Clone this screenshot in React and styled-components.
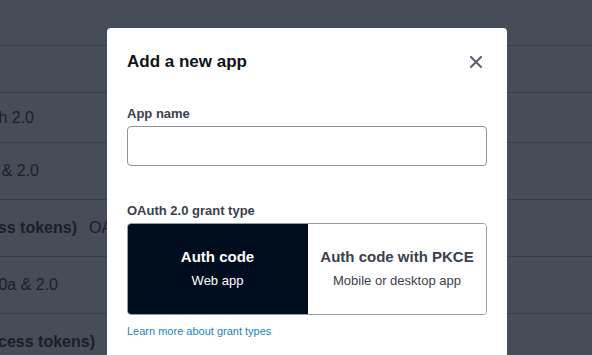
import styled, { createGlobalStyle } from "styled-components"

const GlobalStyle = createGlobalStyle`
    html, body {
        margin: 0;
        padding: 0;
        width: 592px;
        height: 355px;
        overflow: hidden;
        font-family: "Liberation Sans", Arial, sans-serif;
    }
`

const Page = styled.div`
    position: relative;
    width: 592px;
    height: 355px;
    overflow: hidden;
    background: #474c59;
`

const Table = styled.div`
    display: flex;
    flex-direction: column;
`

const Row = styled.div`
    display: flex;
    align-items: center;
    height: ${p => p.h}px;
    border-bottom: 1px solid #3a3e48;
    box-sizing: border-box;
    color: #1b1e25;
    font-size: 16px;
`

// text of the first column runs in from the left edge, so it is right-aligned and cut off on the left
const Cell = styled.div`
    display: flex;
    justify-content: flex-end;
    width: ${p => p.end}px;
    flex-shrink: 0;
    overflow: hidden;

    span {
        flex-shrink: 0;
        white-space: nowrap;
        font-weight: ${p => (p.bold ? 700 : 400)};
    }
`

const Extra = styled.span`
    margin-left: 12px;
    white-space: nowrap;
`

const Modal = styled.div`
    position: absolute;
    left: 107px;
    top: 28px;
    width: 400px;
    height: 360px;
    box-sizing: border-box;
    padding: 20px 20px 0;
    background: #fff;
    border-radius: 4px;
    display: flex;
    flex-direction: column;
`

const Header = styled.div`
    display: flex;
    align-items: center;
    justify-content: space-between;
    height: 28px;
`

const Title = styled.h2`
    margin: 0;
    font-size: 17px;
    font-weight: 700;
    color: #0f1419;
`

const Close = styled.button`
    display: flex;
    align-items: center;
    justify-content: center;
    width: 22px;
    height: 22px;
    margin-right: 0;
    padding: 0;
    border: none;
    background: none;
    color: #5b606c;
`

const Label = styled.label`
    display: block;
    margin-top: ${p => p.top}px;
    margin-bottom: 4px;
    font-size: 13px;
    line-height: 16px;
    font-weight: 700;
    color: #3a404d;
`

const Input = styled.input`
    display: block;
    width: 100%;
    height: 40px;
    box-sizing: border-box;
    border: 1px solid #8f929c;
    border-radius: 4px;
    padding: 0 10px;
    font-size: 15px;
    outline: none;
`

const Segments = styled.div`
    display: grid;
    grid-template-columns: 180px 1fr;
    height: 90px;
    border: 1px solid #9a9ca5;
    border-radius: 4px;
    overflow: hidden;
`

const Segment = styled.div`
    display: flex;
    flex-direction: column;
    align-items: center;
    justify-content: center;
    gap: 6px;
    background: ${p => (p.active ? "#000d1e" : "#fff")};
    color: ${p => (p.active ? "#fff" : "#3a404d")};
    margin: ${p => (p.active ? "-1px 0 -1px -1px" : "0")};
`

const SegTitle = styled.div`
    font-size: 15px;
    line-height: 18px;
    font-weight: 700;
`

const SegSub = styled.div`
    font-size: 13px;
    line-height: 18px;
`

const Link = styled.a`
    margin-top: 9px;
    font-size: 11px;
    line-height: 14px;
    color: #1c7fc4;
    text-decoration: none;
`

const rows = [
    { h: 46 },
    { h: 47 },
    { h: 50, end: 34, text: "OAuth 2.0" },
    { h: 57, end: 39, text: "OAuth 1.0a & 2.0" },
    { h: 57, end: 77, text: "Bearer (access tokens)", bold: true, extra: "OAuth 2.0" },
    { h: 57, end: 58, text: "OAuth 1.0a & 2.0" },
    { h: 57, end: 95, text: "Bearer (access tokens)", bold: true },
]

export default function App() {
    return (
        <>
            <GlobalStyle />
            <Page>
                <Table>
                    {rows.map((r, i) => (
                        <Row key={i} h={r.h}>
                            {r.text && (
                                <Cell end={r.end} bold={r.bold}>
                                    <span>{r.text}</span>
                                </Cell>
                            )}
                            {r.extra && <Extra>{r.extra}</Extra>}
                        </Row>
                    ))}
                </Table>
                <Modal>
                    <Header>
                        <Title>Add a new app</Title>
                        <Close aria-label="Close">
                            <svg width="12" height="12" viewBox="0 0 12 12">
                                <path d="M1 1L11 11M11 1L1 11" stroke="currentColor" strokeWidth="2" strokeLinecap="square" />
                            </svg>
                        </Close>
                    </Header>
                    <Label top={30}>App name</Label>
                    <Input />
                    <Label top={37}>OAuth 2.0 grant type</Label>
                    <Segments>
                        <Segment active>
                            <SegTitle>Auth code</SegTitle>
                            <SegSub>Web app</SegSub>
                        </Segment>
                        <Segment>
                            <SegTitle>Auth code with PKCE</SegTitle>
                            <SegSub>Mobile or desktop app</SegSub>
                        </Segment>
                    </Segments>
                    <Link href="#">Learn more about grant types</Link>
                </Modal>
            </Page>
        </>
    )
}
